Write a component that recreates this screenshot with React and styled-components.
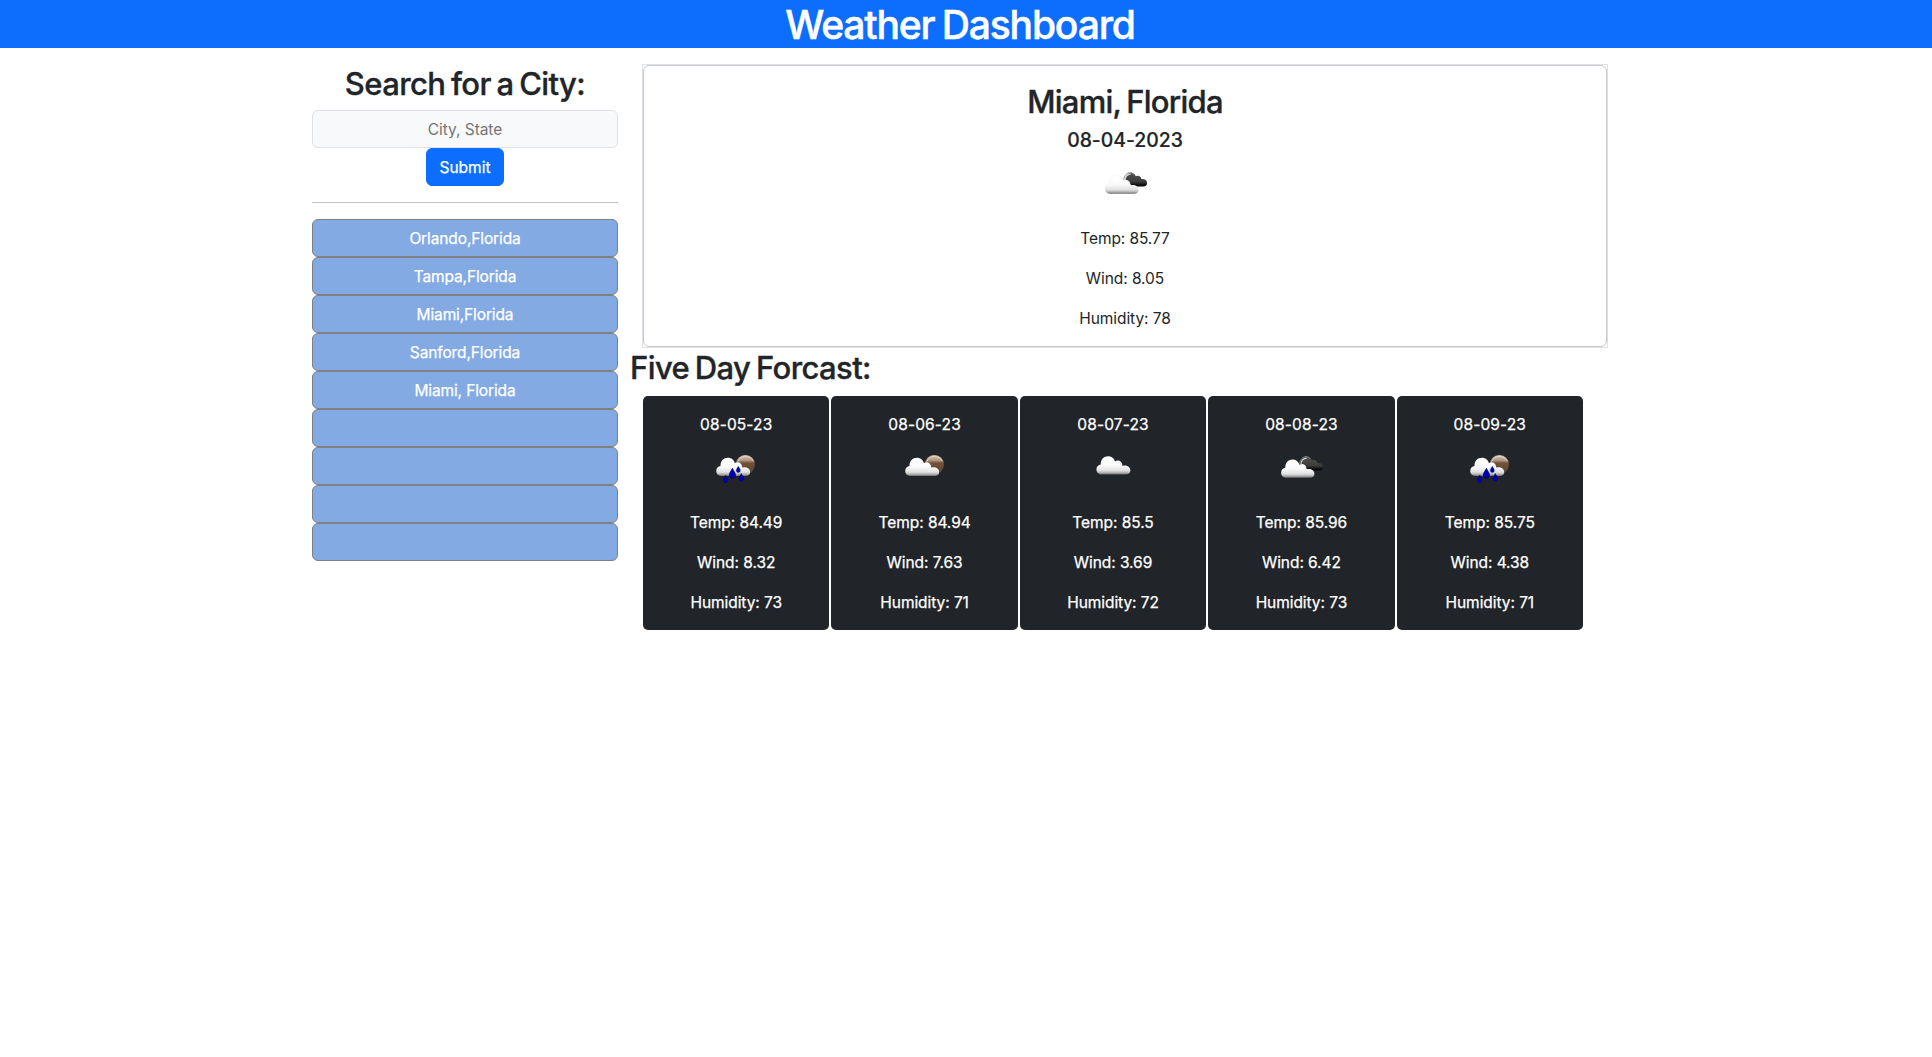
import React from "react";
import styled, { createGlobalStyle, css } from "styled-components";

const Global = createGlobalStyle`
  *, *::before, *::after { box-sizing: border-box; }
  body {
    margin: 0;
    background: #fff;
    color: #212529;
    font-family: Inter, "Liberation Sans", sans-serif;
    font-size: 15.5px;
    line-height: 24px;
    letter-spacing: -0.06px;
  }
`;

const Header = styled.header`
  height: 48px;
  padding: 1px 12px 0 0;
  background: #0d6efd;
  color: #fff;
  text-align: center;
`;

const Title = styled.h1`
  margin: 0;
  font-size: 39px;
  font-weight: 500;
  line-height: 48px;
  letter-spacing: -1.15px;
  word-spacing: -2px;
  -webkit-text-stroke: 0.5px currentColor;
`;

const Container = styled.main`
  display: flex;
  align-items: flex-start;
  width: 1320px;
  margin-left: 300px;
  padding-top: 16px;
`;

const Sidebar = styled.aside`
  display: flex;
  flex-direction: column;
  align-items: stretch;
  width: 330px;
  padding: 0 12px;
  text-align: center;
`;

const Heading = styled.h2`
  margin: 0 0 7px;
  padding-top: 1px;
  font-size: 31px;
  font-weight: 500;
  line-height: 38.4px;
  letter-spacing: ${(p) => p.$tracking};
  word-spacing: -2px;
  -webkit-text-stroke: 0.35px currentColor;
`;

const SearchForm = styled.form`
  display: flex;
  flex-direction: column;
  align-items: center;
`;

const SearchInput = styled.input`
  width: 100%;
  height: 37.6px;
  padding: 6px 12px;
  border: 1px solid #dee2e6;
  border-radius: 6px;
  background: #f8f9fa;
  font: inherit;
  letter-spacing: inherit;
  text-align: center;
  &::placeholder { color: #757575; opacity: 1; }
`;

const SubmitButton = styled.button`
  width: 78px;
  height: 38px;
  padding: 1px 0 0;
  border: 1px solid #0d6efd;
  border-radius: 6px;
  background: #0d6efd;
  color: #fff;
  font: inherit;
  letter-spacing: 0;
  -webkit-text-stroke: 0.25px currentColor;
`;

const Divider = styled.hr`
  width: 100%;
  margin: 16px 0;
  border: 0;
  border-top: 1px solid #c7c8c9;
`;

const HistoryList = styled.div`
  display: flex;
  flex-direction: column;
`;

const HistoryButton = styled.button`
  height: 38px;
  padding: 1px 0 0;
  border: 1px solid #808080;
  border-radius: 6px;
  background: #84aae4;
  color: #fff;
  font: inherit;
  letter-spacing: -0.12px;
  -webkit-text-stroke: 0.25px currentColor;
`;

const Content = styled.section`
  width: 990px;
`;

const CurrentFrame = styled.div`
  margin: 0 12px;
  border: 1px solid #dee2e6;
`;

const CurrentCard = styled.article`
  display: flex;
  flex-direction: column;
  align-items: center;
  height: 282px;
  padding: 16px;
  border: 1px solid #c8c9ca;
  border-radius: 6px;
`;

const CurrentDate = styled.h5`
  margin: 0 0 8px;
  font-size: 19.4px;
  font-weight: 500;
  line-height: 24px;
  letter-spacing: -0.03px;
  -webkit-text-stroke: 0.2px currentColor;
`;

const ForecastRow = styled.div`
  display: flex;
  gap: 2px;
  padding: 1.6px 37px 0 13px;
`;

const ForecastCard = styled.article`
  display: flex;
  flex: 1;
  flex-direction: column;
  align-items: center;
  height: 234px;
  padding: 16px;
  border-radius: 5px;
  background: #212529;
  color: #fff;
  letter-spacing: -0.06px;
  -webkit-text-stroke: 0.25px currentColor;
`;

const DayDate = styled.div`
  margin-bottom: 7px;
  padding-top: 1px;
  letter-spacing: 0.12px;
`;

const Stat = styled.p`
  margin: 0 0 15px;
  padding-top: 1px;
  ${(p) => p.$tight && css`letter-spacing: -0.1px;`}
`;

const Icon = styled.svg`
  display: block;
  flex: none;
  width: 50px;
  height: 50px;
  margin-bottom: 16px;
`;

const CLOUD = "M6 18.2C2.4 18.2 0 16.2 0 13.2C0 10.4 1.9 8.5 4.3 8.2C3.9 3.4 7.4 0 11.8 0C15.3 0 17.8 2.2 18.6 5.2C21.4 3.3 25.8 4.7 26.1 9.8C29.8 8.5 34 10.7 34 14.2C34 16.6 32.2 18.2 29.6 18.2Z";
const DROP = "M0 -4.4C.8 -2.4 2.7 -.6 2.7 1.4C2.7 3.1 1.5 4.2 0 4.2C-1.5 4.2 -2.7 3.1 -2.7 1.4C-2.7 -.6 -.8 -2.4 0 -4.4Z";
const DROPS = [[14.7, 35, 0.85], [21.4, 29.4, 1.15], [27.3, 25.5, 0.72], [30.3, 33.4, 0.88]];

const CLOUD_PLACE = {
  cloud: "translate(8.4 12.2)",
  broken: "translate(4.4 15.2) scale(.98 1)",
  few: "translate(5.2 13.8)",
  rain: "translate(5.2 13.8)",
};

function WeatherIcon({ kind, id }) {
  return (
    <Icon viewBox={kind === "broken" ? "-0.7 -0.3 50 50" : "0 0 50 50"} aria-hidden="true">
      <defs>
        <linearGradient id={`${id}-c`} x1="0" y1="0" x2="0" y2="1">
          <stop offset="0" stopColor="#fff" />
          <stop offset=".5" stopColor="#fafafa" />
          <stop offset=".78" stopColor="#e2e2e2" />
          <stop offset=".9" stopColor="#b4b4b4" />
          <stop offset="1" stopColor="#707070" />
        </linearGradient>
        <linearGradient id={`${id}-s`} x1="0" y1="0" x2="0" y2="1">
          <stop offset="0" stopColor="#d8c8bb" />
          <stop offset=".28" stopColor="#b09580" />
          <stop offset=".42" stopColor="#725139" />
          <stop offset="1" stopColor="#5a4330" />
        </linearGradient>
        <linearGradient id={`${id}-d`} x1="0" y1="0" x2="0" y2="1">
          <stop offset="0" stopColor="#505050" />
          <stop offset=".65" stopColor="#3c3c3c" />
          <stop offset=".85" stopColor="#151515" />
          <stop offset="1" stopColor="#000" />
        </linearGradient>
      </defs>
      {(kind === "rain" || kind === "few") && (
        <>
          <circle cx="34.4" cy="20.6" r="9.6" fill={`url(#${id}-s)`} />
          <path d="M26.6 17.8A8.7 8.7 0 0 1 42.2 17" fill="none" stroke="#e9ded5" strokeWidth="1" opacity=".75" />
        </>
      )}
      {kind === "broken" && (
        <>
          <path d="M25 20.5C25 15.5 27.3 12.5 30.4 12.5C32.8 12.5 34.3 13.8 35 16C37.6 14.4 40.4 16.2 40.7 18.8C43.6 18.2 46.4 20 46.4 22.6C46.4 24.8 44.8 26.2 42.4 26.2H32Z" fill={`url(#${id}-d)`} />
          <path d="M23 19.5C23.4 15.4 26 12.4 29.4 12.4C31.3 12.4 32.5 13.2 33.4 14.6" fill="none" stroke="#8d8d8d" strokeWidth="1" />
          <path d="M24.3 19.8C24.6 16.4 27 14 30 13.8" fill="none" stroke="#d0d0d0" strokeWidth="1.1" />
        </>
      )}
      <path d={CLOUD} transform={CLOUD_PLACE[kind]} fill={`url(#${id}-c)`} stroke="#000" strokeOpacity=".06" strokeWidth=".6" />
      {kind === "rain" && DROPS.map(([x, y, s]) => (
        <path key={x} d={DROP} transform={`translate(${x} ${y}) scale(${s})`} fill="#0000b4" stroke="#000064" strokeWidth=".6" />
      ))}
    </Icon>
  );
}

const HISTORY = ["Orlando,Florida", "Tampa,Florida", "Miami,Florida", "Sanford,Florida", "Miami, Florida", "", "", "", ""];

const DAYS = [
  { date: "08-05-23", kind: "rain", temp: "84.49", wind: "8.32", humidity: "73" },
  { date: "08-06-23", kind: "few", temp: "84.94", wind: "7.63", humidity: "71" },
  { date: "08-07-23", kind: "cloud", temp: "85.5", wind: "3.69", humidity: "72" },
  { date: "08-08-23", kind: "broken", temp: "85.96", wind: "6.42", humidity: "73" },
  { date: "08-09-23", kind: "rain", temp: "85.75", wind: "4.38", humidity: "71" },
];

function Stats({ temp, wind, humidity, tight }) {
  return (
    <>
      <Stat $tight={tight}>Temp: {temp}</Stat>
      <Stat>Wind: {wind}</Stat>
      <Stat>Humidity: {humidity}</Stat>
    </>
  );
}

export default function App() {
  return (
    <>
      <Global />
      <Header>
        <Title>Weather Dashboard</Title>
      </Header>
      <Container>
        <Sidebar>
          <Heading $tracking="-0.6px">Search for a City:</Heading>
          <SearchForm onSubmit={(e) => e.preventDefault()}>
            <SearchInput placeholder="City, State" />
            <SubmitButton>Submit</SubmitButton>
          </SearchForm>
          <Divider />
          <HistoryList>
            {HISTORY.map((city, i) => (
              <HistoryButton key={i}>{city}</HistoryButton>
            ))}
          </HistoryList>
        </Sidebar>
        <Content>
          <CurrentFrame>
            <CurrentCard>
              <Heading $tracking="-0.76px">Miami, Florida</Heading>
              <CurrentDate>08-04-2023</CurrentDate>
              <WeatherIcon kind="broken" id="now" />
              <Stats temp="85.77" wind="8.05" humidity="78" tight />
            </CurrentCard>
          </CurrentFrame>
          <Heading $tracking="-0.6px">Five Day Forcast:</Heading>
          <ForecastRow>
            {DAYS.map((d, i) => (
              <ForecastCard key={d.date}>
                <DayDate>{d.date}</DayDate>
                <WeatherIcon kind={d.kind} id={`day${i}`} />
                <Stats {...d} />
              </ForecastCard>
            ))}
          </ForecastRow>
        </Content>
      </Container>
    </>
  );
}
